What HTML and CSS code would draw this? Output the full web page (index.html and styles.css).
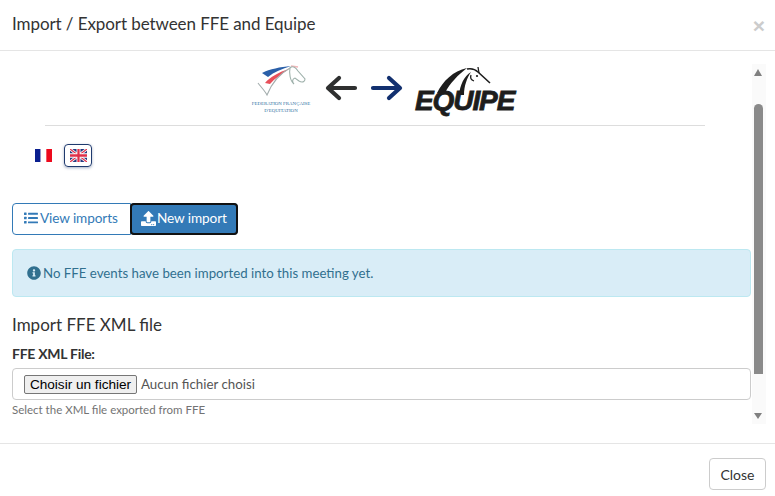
FILE: index.html
```html
<!DOCTYPE html>
<html lang="en">
<head>
<meta charset="utf-8">
<title>Import / Export between FFE and Equipe</title>
<link rel="stylesheet" href="styles.css">
</head>
<body>
<div class="modal">
  <header class="modal-header">
    <h1 class="modal-title">Import / Export between FFE and Equipe</h1>
    <span class="close-x">×</span>
  </header>
  <div class="modal-body">
    <main class="content">
      <div class="logos">
        <div class="ffe-logo">
          <svg class="ffe-mark" width="54" height="33" viewBox="0 0 54 33">
            <path d="M8 8 C16 4 26 2 37 1 C28 4 20 7 14 12 Z" fill="#2a5fa8"/>
            <path d="M11 18 C16 12 25 7 35 4 C28 9 21 13 16 19 Z" fill="#e8505a"/>
            <path d="M37 1 L44 2" stroke="#f3b6b8" stroke-width="1.5" fill="none"/>
            <path d="M4 18 C7 22 11 26 13 30 C17 20 25 9 36 3" stroke="#a3adad" stroke-width="1.1" fill="none"/>
            <path d="M36 3 C39 0 42 3 44 6 L51 14 C51 17 48 18 45 16 L41 13 C38 14 38 17 40 19 C36 16 35 8 36 3 Z" fill="#fff" stroke="#9db0aa" stroke-width="1.1"/>
          </svg>
          <div class="ffe-text">FEDERATION FRANÇAISE<br>D'EQUITATION</div>
        </div>
        <svg class="arrow" width="33" height="26" viewBox="0 0 33 26"><path d="M30 13 H4 M14 3 L3 13 L14 23" fill="none" stroke="#2f3030" stroke-width="4.2" stroke-linecap="round" stroke-linejoin="round"/></svg>
        <svg class="arrow arrow-right" width="33" height="26" viewBox="0 0 33 26"><path d="M3 13 H29 M19 3 L30 13 L19 23" fill="none" stroke="#12306f" stroke-width="4.2" stroke-linecap="round" stroke-linejoin="round"/></svg>
        <div class="equipe-logo">
          <svg class="equipe-mark" width="100" height="31" viewBox="0 0 100 31">
            <path d="M22 25 C28 13 38 3 52 0 C43 7 35 15 30 25 Z" fill="#1d1d1d"/>
            <path d="M44 27 C45 17 49 8 56 4 C52 10 49 18 49 27 Z" fill="#1d1d1d"/>
            <path d="M52 1 C57 0 60 1 63 4 L75 15" fill="none" stroke="#1d1d1d" stroke-width="1.6"/>
            <path d="M63 -1 L64 5 M56 7 C55 10 56 12 59 13" fill="none" stroke="#1d1d1d" stroke-width="1.3"/>
            <circle cx="62" cy="8" r="1.1" fill="#1d1d1d"/>
          </svg>
          <div class="equipe-text">EQUIPE</div>
        </div>
      </div>
      <hr class="divider">
      <div class="flags">
        <span class="flag-slot">
          <svg class="flag" width="17" height="13" viewBox="0 0 3 2" preserveAspectRatio="none"><rect width="1" height="2" fill="#0a1f8f"/><rect x="1" width="1" height="2" fill="#fff"/><rect x="2" width="1" height="2" fill="#ed0a1d"/></svg>
        </span>
        <span class="flag-btn">
          <svg class="flag" width="17" height="13" viewBox="0 0 60 40" preserveAspectRatio="none">
            <rect width="60" height="40" fill="#27397f"/>
            <path d="M0 0 L60 40 M60 0 L0 40" stroke="#fff" stroke-width="9"/>
            <path d="M0 0 L60 40 M60 0 L0 40" stroke="#e0304a" stroke-width="4"/>
            <path d="M30 0 V40 M0 20 H60" stroke="#fff" stroke-width="14"/>
            <path d="M30 0 V40 M0 20 H60" stroke="#e0304a" stroke-width="8"/>
          </svg>
        </span>
      </div>
      <div class="btn-group">
        <a class="btn btn-outline">
          <svg class="icon" width="14" height="14" viewBox="0 0 14 14" fill="currentColor"><rect x="0" y="1.5" width="2.6" height="2.4" rx=".5"/><rect x="0" y="5.8" width="2.6" height="2.4" rx=".5"/><rect x="0" y="10.1" width="2.6" height="2.4" rx=".5"/><rect x="4" y="1.8" width="10" height="1.9" rx=".4"/><rect x="4" y="6.1" width="10" height="1.9" rx=".4"/><rect x="4" y="10.4" width="10" height="1.9" rx=".4"/></svg>View imports
        </a>
        <a class="btn btn-primary">
          <svg class="icon icon-tight" width="15" height="15" viewBox="0 0 512 512" fill="currentColor"><path d="M296 384h-80c-13.3 0-24-10.7-24-24V192h-87.7c-17.8 0-26.7-21.5-14.1-34.1L242.3 5.7c7.5-7.5 19.8-7.5 27.3 0l152.2 152.2c12.6 12.6 3.7 34.1-14.1 34.1H320v168c0 13.3-10.7 24-24 24zm216-8v112c0 13.3-10.7 24-24 24H24c-13.3 0-24-10.7-24-24V376c0-13.3 10.7-24 24-24h136v8c0 30.9 25.1 56 56 56h80c30.9 0 56-25.1 56-56v-8h136c13.3 0 24 10.7 24 24zm-124 88c0-11-9-20-20-20s-20 9-20 20 9 20 20 20 20-9 20-20zm64 0c0-11-9-20-20-20s-20 9-20 20 9 20 20 20 20-9 20-20z"/></svg>New import
        </a>
      </div>
      <div class="alert">
        <svg class="icon" width="14" height="14" viewBox="0 0 512 512" fill="currentColor"><path d="M256 8C119 8 8 119 8 256s111 248 248 248 248-111 248-248S393 8 256 8zm0 110c23.196 0 42 18.804 42 42s-18.804 42-42 42-42-18.804-42-42 18.804-42 42-42zm56 254c0 6.627-5.373 12-12 12h-88c-6.627 0-12-5.373-12-12v-24c0-6.627 5.373-12 12-12h12v-64h-12c-6.627 0-12-5.373-12-12v-24c0-6.627 5.373-12 12-12h64c6.627 0 12 5.373 12 12v100h12c6.627 0 12 5.373 12 12v24z"/></svg>No FFE events have been imported into this meeting yet.
      </div>
      <h2 class="section-title">Import FFE XML file</h2>
      <div class="field-label">FFE XML File:</div>
      <div class="file-input">
        <button class="file-btn" type="button">Choisir un fichier</button>
        <span class="file-name">Aucun fichier choisi</span>
      </div>
      <div class="help">Select the XML file exported from FFE</div>
    </main>
    <div class="scrollbar">
      <span class="sb-up"></span>
      <span class="sb-thumb"></span>
      <span class="sb-down"></span>
    </div>
  </div>
  <footer class="modal-footer">
    <button class="btn-close" type="button">Close</button>
  </footer>
</div>
</body>
</html>
```

FILE: styles.css
```css
* { box-sizing: border-box; }
html, body { margin: 0; padding: 0; }
body {
  width: 775px;
  height: 496px;
  overflow: hidden;
  background: #fff;
  font-family: Lato, "Liberation Sans", sans-serif;
  font-size: 13.3px;
  color: #333;
}
.modal { display: flex; flex-direction: column; height: 496px; }
.modal-header {
  height: 51px;
  flex: none;
  display: flex;
  align-items: center;
  justify-content: space-between;
  padding: 0 10px 3px 12px;
  border-bottom: 1px solid #e5e5e5;
}
.modal-title { margin: 0; font-size: 17px; font-weight: 400; color: #333; line-height: 24px; letter-spacing: -0.08px; }
.close-x { font-size: 21px; font-weight: 700; color: #ccc; line-height: 1; font-family: "Liberation Sans", sans-serif; margin-top: 3px; }
.modal-body { height: 392px; flex: none; display: flex; }
.content { width: 752px; flex: none; padding: 0 1px 0 12px; }
.logos { height: 74px; display: flex; align-items: flex-start; padding: 14px 0 0 240px; }
.ffe-logo { width: 58px; display: flex; flex-direction: column; align-items: center; }
.ffe-text {
  font-family: "Liberation Serif", serif;
  font-size: 4.9px;
  line-height: 6.5px;
  color: #2f6f9f;
  text-align: center;
  white-space: nowrap;
  margin-top: 3px;
}
.arrow { margin: 10px 0 0 15px; }
.arrow-right { margin-left: 12px; }
.equipe-logo { width: 100px; margin-left: 12px; position: relative; height: 48px; margin-top: 3px; }
.equipe-mark { display: block; overflow: visible; }
.equipe-text {
  position: absolute;
  left: 0;
  top: 17px;
  font-family: "Liberation Sans", sans-serif;
  font-size: 28px;
  font-weight: 700;
  font-style: italic;
  letter-spacing: -1.1px;
  line-height: 32px;
  color: #1d1d1d;
  -webkit-text-stroke: .8px #1d1d1d;
}
.divider { margin: 0 46px 0 33px; border: 0; border-top: 1px solid #ddd; }
.flags { display: flex; align-items: center; height: 23px; margin-top: 18px; padding-left: 23px; gap: 12px; }
.flag-slot { display: flex; }
.flag { display: block; }
.flag-btn {
  width: 28px;
  height: 23px;
  display: flex;
  align-items: center;
  justify-content: center;
  border: 1px solid #1f3a6e;
  border-radius: 4px;
  box-shadow: 0 1px 3px rgba(31, 58, 110, .4);
}
.btn-group { display: flex; margin-top: 36px; }
.btn {
  height: 32px;
  display: flex;
  align-items: center;
  padding-bottom: 2px;
  font-size: 13.6px;
  line-height: 20px;
  letter-spacing: -0.1px;
  border: 1px solid #337ab7;
}
.icon { flex: none; margin-right: 2px; }
.icon-tight { margin-right: 1px; }
.btn-outline { width: 119px; padding-left: 11px; color: #337ab7; background: #fff; border-radius: 4px 0 0 4px; }
.btn-primary {
  width: 108px;
  margin-left: -1px;
  padding-left: 10px;
  color: #fff;
  background: #337ab7;
  border-radius: 4px;
  outline: 2px solid #111;
  outline-offset: -2px;
}
.alert {
  height: 48px;
  margin-top: 14px;
  display: flex;
  align-items: center;
  padding: 0 14px 1px;
  font-size: 13.25px;
  background: #d9edf7;
  border: 1px solid #bce8f1;
  border-radius: 4px;
  color: #31708f;
}
.section-title { margin: 18px 0 0; font-size: 17px; font-weight: 400; line-height: 20px; color: #333; }
.field-label { margin-top: 9px; font-size: 14px; font-weight: 700; line-height: 20px; color: #333; letter-spacing: -0.27px; }
.file-input {
  height: 32px;
  margin-top: 4px;
  display: flex;
  align-items: center;
  padding-left: 11px;
  border: 1px solid #ccc;
  border-radius: 4px;
  color: #555;
}
.file-btn {
  width: 113px;
  height: 19px;
  padding: 0;
  font-family: "Liberation Sans", sans-serif;
  font-size: 13.6px;
  line-height: 15px;
  color: #000;
  background: #efefef;
  border: 1px solid #767676;
  border-radius: 2px;
}
.file-name { margin-left: 4px; }
.help { margin-top: 3px; font-size: 11.5px; line-height: 14px; color: #737373; }
.scrollbar {
  width: 14px;
  height: 360px;
  margin-top: 13px;
  padding-left: 2px;
  display: flex;
  flex-direction: column;
  align-items: flex-start;
  background: #fafafa;
}
.sb-up, .sb-down { width: 0; height: 0; border-left: 4.5px solid transparent; border-right: 4.5px solid transparent; flex: none; }
.sb-up { margin-top: 5px; border-bottom: 7px solid #808080; }
.sb-thumb { width: 9px; height: 270px; margin-top: 28px; background: #8a8a8a; border-radius: 5px 5px 0 0; flex: none; }
.sb-down { margin-top: 39px; border-top: 6px solid #808080; }
.modal-footer {
  flex: 1;
  display: flex;
  justify-content: flex-end;
  align-items: flex-start;
  padding: 14px 9px 0 0;
  border-top: 1px solid #e5e5e5;
}
.btn-close {
  width: 57px;
  height: 32px;
  font-family: Lato, sans-serif;
  font-size: 14px;
  color: #333;
  background: #fff;
  border: 1px solid #ccc;
  border-radius: 4px;
}
```
